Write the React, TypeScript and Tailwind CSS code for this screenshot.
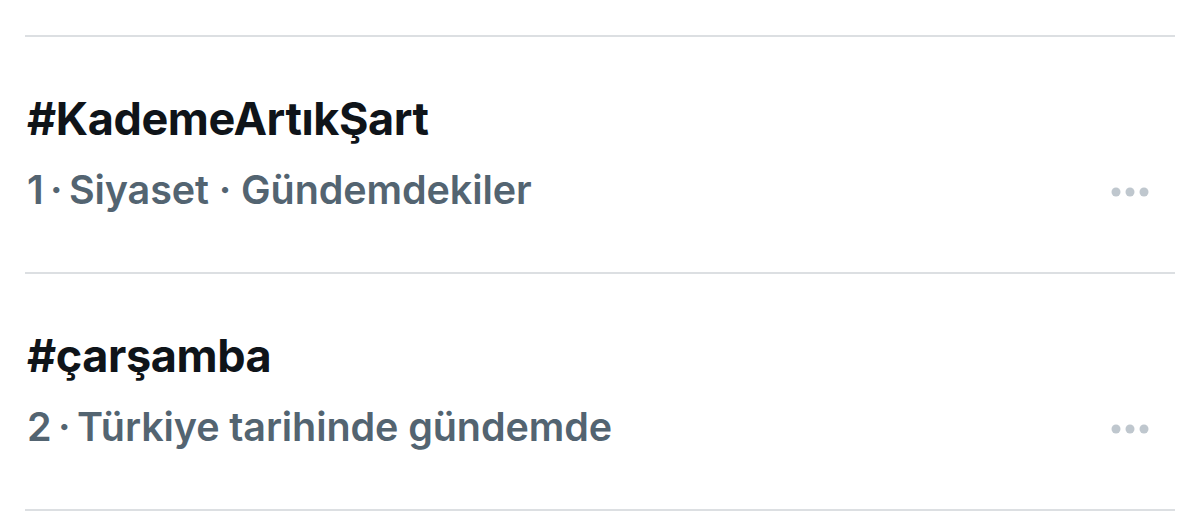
const trends = [
  { tag: '#KademeArtıkŞart', meta: '1\u2009·\u2009Siyaset · Gündemdekiler' },
  { tag: '#çarşamba', meta: '2\u2009·\u2009Türkiye tarihinde gündemde' },
];

function MoreDots() {
  return (
    <svg width="38" height="10" viewBox="0 0 38 10" className="text-[#bfc7ce]">
      <circle cx="5" cy="5" r="4.5" fill="currentColor" />
      <circle cx="19" cy="5" r="4.5" fill="currentColor" />
      <circle cx="33" cy="5" r="4.5" fill="currentColor" />
    </svg>
  );
}

export default function App() {
  return (
    <div className="w-[1200px] h-[521px] bg-white overflow-hidden pt-[35px] pl-[25px] pr-[25px]" style={{ fontFamily: 'Inter, "Noto Sans", sans-serif' }}>
      {trends.map((t) => (
        <div key={t.tag} className="border-t-2 border-[#dcdfe2] h-[237px] flex flex-col pt-[54px] pl-[2px] pr-[26px]">
          <div className="text-[45px] leading-[56px] font-bold text-[#0f1419] tracking-[-0.4px]">{t.tag}</div>
          <div className="flex items-center justify-between mt-[17px]">
            <div className="text-[39.5px] leading-[52px] font-semibold text-[#536471] tracking-[-0.1px]">{t.meta}</div>
            <div className="mt-[4px]">
              <MoreDots />
            </div>
          </div>
        </div>
      ))}
      <div className="border-t-2 border-[#dcdfe2]" />
    </div>
  );
}
